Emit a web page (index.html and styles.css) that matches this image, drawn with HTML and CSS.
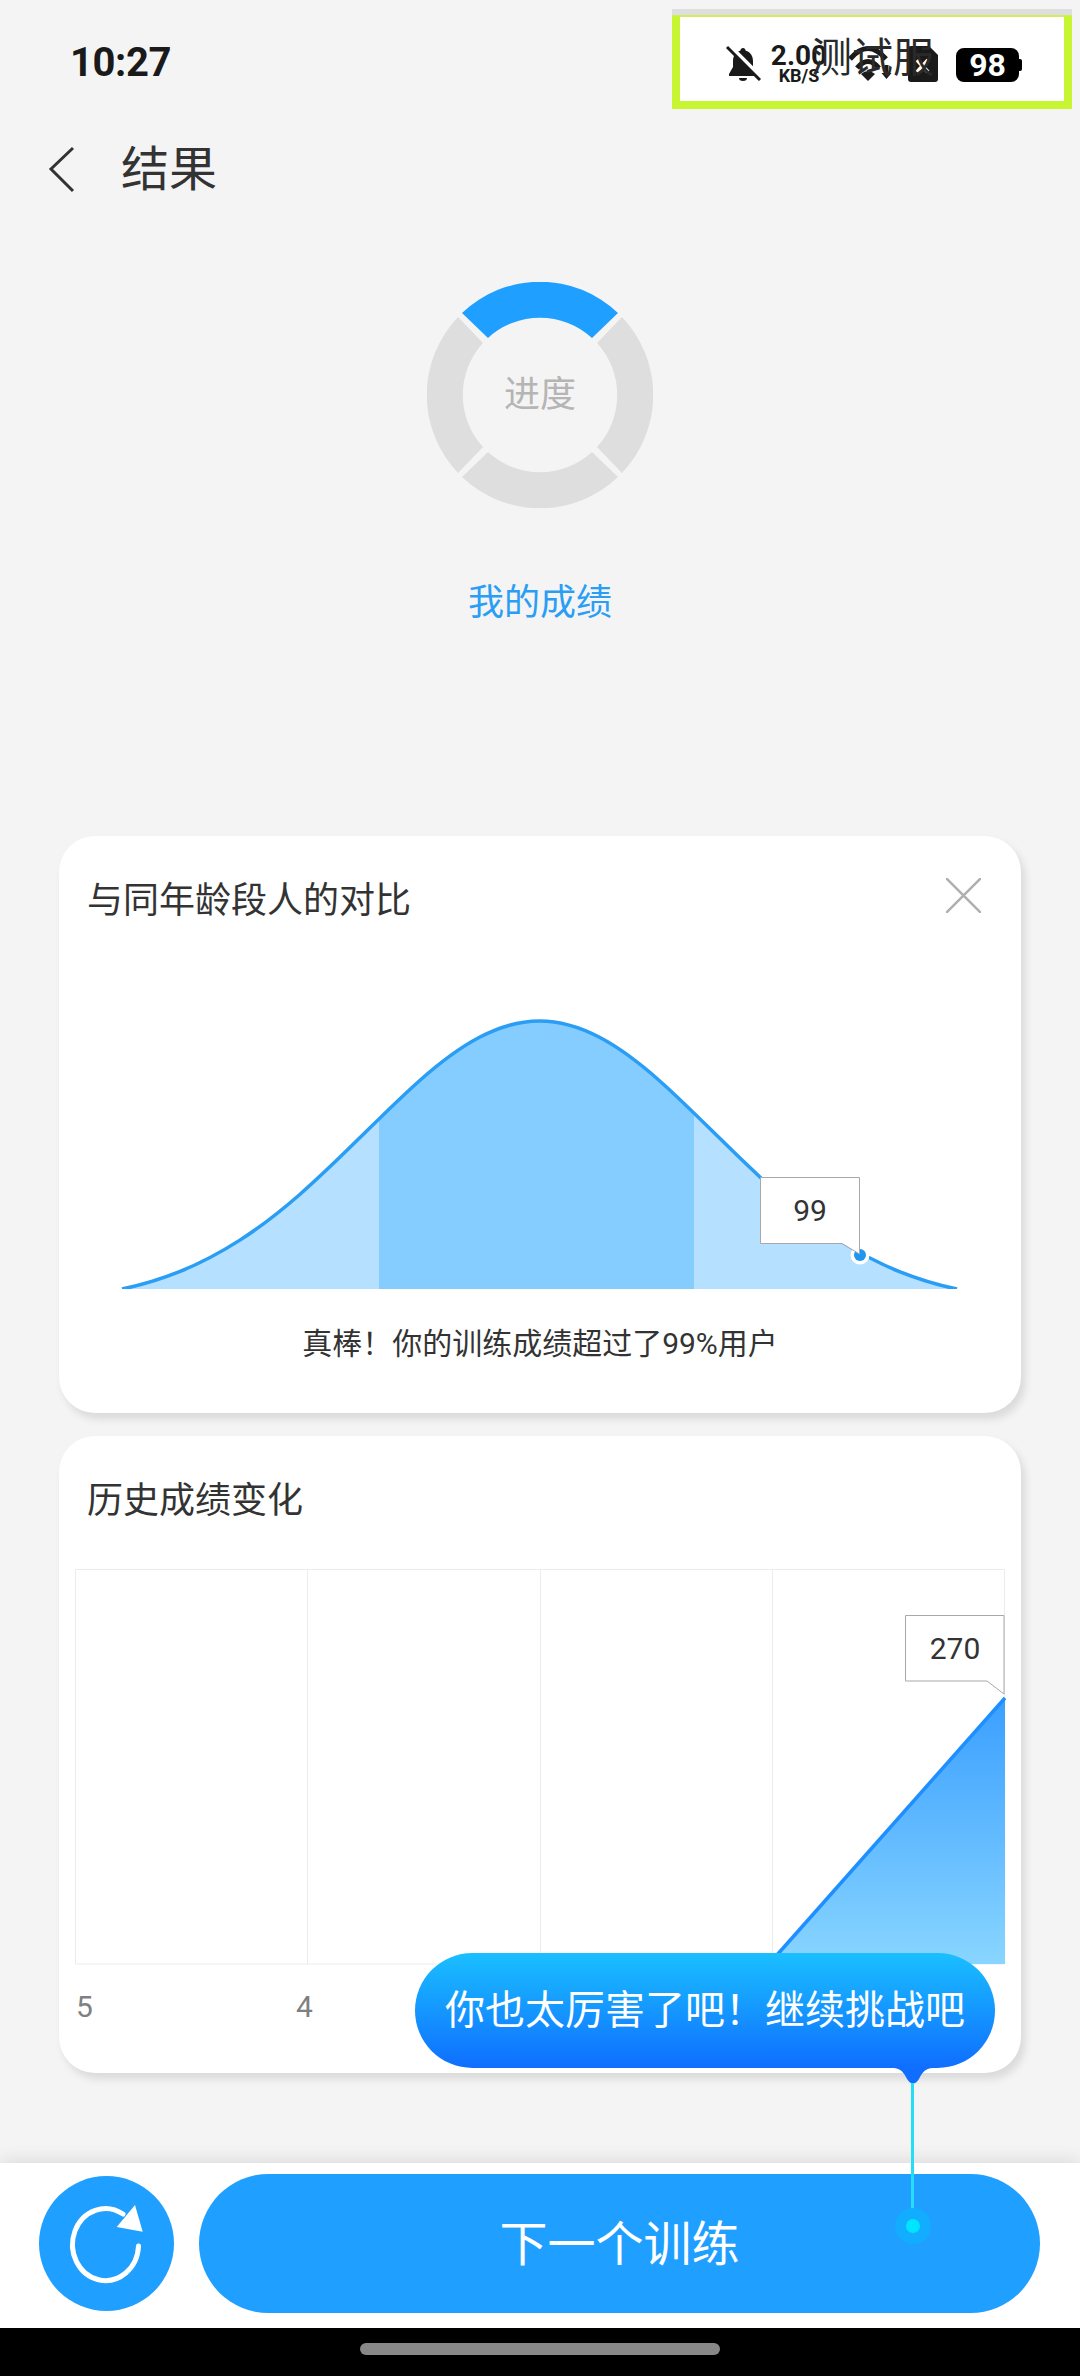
FILE: index.html
```html
<!DOCTYPE html>
<html lang="zh">
<head>
<meta charset="utf-8">
<title>结果</title>
<link rel="stylesheet" href="styles.css">
</head>
<body>
<div class="screen">
  <header class="status">
    <span class="time">10:27</span>
    <div class="status-box">
      <svg class="ic-bell" viewBox="0 0 36 36"><path class="dark" d="M18 3c-1.500 0-2.500 1-2.500 2.500C10.500 7 8 11 8 16v6l-4 7v2h28v-2l-4-7v-6c0-5-2.500-9-7.500-10.500C20.500 4 19.500 3 18 3zM14 33a4 3 0 0 0 8 0z"/><path class="slash-gap" d="M5 1l33 33"/><path class="slash" d="M2 2l33 33"/></svg>
      <div class="speed"><span class="speed-num">2.00</span><span class="speed-unit">KB/S</span></div>
      <svg class="ic-wifi" viewBox="0 0 45 38"><path class="wifi-arc" d="M0 15Q18-6 36 15M7 24Q18 11 29 24"/><path class="dark" d="M11 30Q18 24 25 30L18 37z"/><path class="dark" d="M34.500 21h4v8h3l-5 6-5-6h3z"/></svg>
      <svg class="ic-sim" viewBox="0 0 30 36"><path class="dark" d="M3 0H21L30 9V33a3 3 0 0 1-3 3H3a3 3 0 0 1-3-3V3a3 3 0 0 1 3-3z"/><path class="sim-x" d="M9 14l11 12M20 14L9 26"/></svg>
      <div class="battery"><span class="battery-num">98</span></div>
      <span class="server">测试服</span>
    </div>
  </header>

  <nav class="nav">
    <svg class="ic-back" viewBox="0 0 28 48"><path d="M25 2L3 23l22 22"/></svg>
    <h1 class="nav-title">结果</h1>
  </nav>

  <section class="progress">
    <div class="ring">
      <svg class="ring-svg" viewBox="0 0 226 226">
        <path class="seg-on" d="M35 31A113 113 0 0 1 191 31L165 56A77 77 0 0 0 61 56z"/>
        <path class="seg" d="M195 35A113 113 0 0 1 195 191L170 165A77 77 0 0 0 170 61z"/>
        <path class="seg" d="M191 195A113 113 0 0 1 35 195L61 170A77 77 0 0 0 165 170z"/>
        <path class="seg" d="M31 191A113 113 0 0 1 31 35L56 61A77 77 0 0 0 56 165z"/>
      </svg>
      <span class="ring-label">进度</span>
    </div>
    <p class="my-score">我的成绩</p>
  </section>

  <section class="card card-compare">
    <div class="card-head">
      <h2 class="card-title">与同年龄段人的对比</h2>
      <svg class="ic-close" viewBox="0 0 35 35"><path d="M0 0l35 35M35 0L0 35"/></svg>
    </div>
    <svg class="chart-bell" viewBox="59 960 962 350">
      <defs>
        <clipPath id="bellArea"><path d="M122 1289C141.200 1285.200 160.300 1279.400 179.500 1271.700C199.500 1263.600 219.500 1253.200 239.500 1240.400C259.500 1227.600 279.500 1212.100 299.500 1194.700C319.500 1177.300 339.500 1157.800 359.500 1138.100C379.500 1118.400 399.500 1098.400 419.500 1080.700C439.500 1063 459.500 1047.800 479.500 1037.300C499.500 1026.800 519.500 1021 539.500 1021C559.500 1021 579.500 1026.800 599.500 1037.300C619.500 1047.800 639.500 1063 659.500 1080.700C679.500 1098.400 699.500 1118.400 719.500 1138.100C739.500 1157.800 759.500 1177.300 779.500 1194.700C799.500 1212.100 819.500 1227.600 839.500 1240.400C859.500 1253.200 879.500 1263.600 899.500 1271.700C918.700 1279.400 937.800 1285.200 957 1289z"/></clipPath>
        <clipPath id="bellBase"><rect x="59" y="960" width="962" height="329"/></clipPath>
      </defs>
      <rect class="bell-light" x="100" y="1000" width="880" height="289" clip-path="url(#bellArea)"/>
      <rect class="bell-dark" x="379" y="1000" width="315" height="289" clip-path="url(#bellArea)"/>
      <g clip-path="url(#bellBase)">
        <path class="bell-line" d="M122 1289C141.200 1285.200 160.300 1279.400 179.500 1271.700C199.500 1263.600 219.500 1253.200 239.500 1240.400C259.500 1227.600 279.500 1212.100 299.500 1194.700C319.500 1177.300 339.500 1157.800 359.500 1138.100C379.500 1118.400 399.500 1098.400 419.500 1080.700C439.500 1063 459.500 1047.800 479.500 1037.300C499.500 1026.800 519.500 1021 539.500 1021C559.500 1021 579.500 1026.800 599.500 1037.300C619.500 1047.800 639.500 1063 659.500 1080.700C679.500 1098.400 699.500 1118.400 719.500 1138.100C739.500 1157.800 759.500 1177.300 779.500 1194.700C799.500 1212.100 819.500 1227.600 839.500 1240.400C859.500 1253.200 879.500 1263.600 899.500 1271.700C918.700 1279.400 937.800 1285.200 957 1289"/>
      </g>
      <circle class="dot-ring" cx="860" cy="1255" r="9.500"/>
      <circle class="dot" cx="860" cy="1255" r="6"/>
      <path class="tip" d="M760.500 1177.500H859.500V1254L842 1243.500H760.500z"/>
      <text class="tip-text" x="810" y="1221">99</text>
    </svg>
    <p class="caption">真棒！你的训练成绩超过了99%用户</p>
  </section>

  <section class="card card-history">
    <div class="card-head">
      <h2 class="card-title">历史成绩变化</h2>
    </div>
    <svg class="chart-history" viewBox="59 1560 962 415">
      <defs>
        <linearGradient id="histFill" gradientUnits="userSpaceOnUse" x1="0" y1="1698" x2="0" y2="1964">
          <stop offset="0" stop-color="#3a9fff"/>
          <stop offset="1" stop-color="#88d5ff"/>
        </linearGradient>
      </defs>
      <path class="grid" d="M75.500 1569.500H1004.500V1964H75.500zM307.500 1569.500V1964M540.500 1569.500V1964M772.500 1569.500V1964"/>
      <path class="hist-fill" d="M769 1964L1005 1698V1964z"/>
      <path class="hist-line" d="M769 1964L1005 1698"/>
      <path class="tip" d="M905.500 1615.500H1004V1694L987 1681H905.500z"/>
      <text class="tip-text" x="955" y="1659">270</text>
    </svg>
    <div class="axis"><span class="axis-label">5</span><span class="axis-label">4</span></div>
  </section>

  <footer class="bottom">
    <div class="actions">
      <button class="btn-refresh">
        <svg class="ic-refresh" viewBox="0 0 135 135"><path class="refresh-arc" d="M99.500 70A33 36 0 1 1 84 38"/><path class="refresh-head" d="M96 29L103.700 55.700L77.700 51z"/></svg>
      </button>
      <button class="btn-next">下一个训练</button>
    </div>
    <div class="home"><span class="home-pill"></span></div>
  </footer>

  <div class="coach">
    <p class="coach-text">你也太厉害了吧！继续挑战吧</p>
    <svg class="coach-tail" viewBox="0 0 40 16"><path d="M0 0C8 0 11 5 14 11Q20 20 26 11C29 5 32 0 40 0z"/></svg>
  </div>
  <span class="coach-line"></span>
  <span class="coach-halo"><span class="coach-dot"></span></span>
</div>
</body>
</html>
```
FILE: styles.css
```css
* { box-sizing: border-box; }
html, body { margin: 0; padding: 0; }
body { font-family: Roboto, "Noto Sans CJK SC", sans-serif; color: #333; }
h1, h2, p { margin: 0; font-weight: 400; }

.screen {
  position: relative;
  width: 1080px;
  height: 2376px;
  background: #f4f4f4;
  display: flex;
  flex-direction: column;
  overflow: hidden;
}

/* status bar */
.status {
  height: 120px;
  padding: 15px 8px 0 70px;
  display: flex;
  justify-content: space-between;
  align-items: flex-start;
  flex: none;
}
.time {
  margin-top: 28px;
  font-size: 40px;
  line-height: 40px;
  font-weight: 700;
  letter-spacing: -0.4px;
  color: #1a1a1a;
}
.status-box {
  position: relative;
  width: 400px;
  height: 94px;
  background: #fff;
  border: 8px solid #c8f532;
  border-top: 2px solid #cfee5e;
  box-shadow: 0 -6px 0 #dedede;
  padding-left: 45px;
  display: flex;
  align-items: flex-start;
}
.dark { fill: #1a1a1a; }
.ic-bell { width: 36px; height: 36px; margin-top: 28px; flex: none; }
.slash { fill: none; stroke: #1a1a1a; stroke-width: 3; }
.slash-gap { fill: none; stroke: #fff; stroke-width: 4; }
.speed { width: 54px; margin: 27px 0 0 11px; display: flex; flex-direction: column; align-items: center; flex: none; color: #1a1a1a; font-weight: 700; }
.speed-num { font-size: 28px; line-height: 24px; }
.speed-unit { font-size: 18px; line-height: 14px; margin-top: 1px; }
.ic-wifi { width: 45px; height: 38px; margin: 27px 0 0 24px; flex: none; overflow: visible; }
.wifi-arc { fill: none; stroke: #1a1a1a; stroke-width: 5; }
.ic-sim { width: 30px; height: 36px; margin: 29px 0 0 13px; flex: none; }
.sim-x { fill: none; stroke: #fff; stroke-width: 4; }
.battery {
  position: relative;
  width: 63px;
  height: 34px;
  margin: 31px 0 0 18px;
  background: #000;
  border-radius: 8px;
  display: flex;
  align-items: center;
  justify-content: center;
  flex: none;
}
.battery::after {
  content: "";
  position: absolute;
  left: 63px;
  top: 11px;
  width: 3px;
  height: 12px;
  background: #000;
  border-radius: 0 2px 2px 0;
}
.battery-num { color: #fff; font-size: 32px; line-height: 34px; font-weight: 700; }
.server {
  position: absolute;
  left: 131px;
  top: 17px;
  font-size: 41px;
  line-height: 48px;
  color: #2a2a2a;
  font-weight: 400;
}

/* nav */
.nav { height: 100px; padding-left: 48px; display: flex; align-items: center; flex: none; }
.ic-back { width: 28px; height: 48px; flex: none; }
.ic-back path { fill: none; stroke: #333; stroke-width: 3; }
.nav-title { margin-left: 45px; font-size: 48px; line-height: 60px; color: #333; }

/* progress */
.progress { margin-top: 62px; display: flex; flex-direction: column; align-items: center; flex: none; }
.ring { width: 226px; height: 226px; display: grid; place-items: center; }
.ring-svg, .ring-label { grid-area: 1 / 1; }
.ring-svg { width: 226px; height: 226px; display: block; }
.seg { fill: #dedede; }
.seg-on { fill: #1f9fff; }
.ring-label { font-size: 36px; line-height: 50px; color: #b5b5b5; }
.my-score { margin-top: 70px; font-size: 36px; line-height: 50px; color: #2a9df4; }

/* cards */
.card {
  width: 962px;
  margin-left: 59px;
  background: #fff;
  border-radius: 36px;
  box-shadow: 4px 6px 8px rgba(0, 0, 0, 0.11);
  flex: none;
}
.card-compare { margin-top: 208px; height: 577px; }
.card-history { margin-top: 23px; height: 637px; }
.card-head { padding: 40px 40px 0 28px; display: flex; justify-content: space-between; align-items: flex-start; }
.card-title { font-size: 36px; line-height: 50px; color: #333; }
.ic-close { width: 35px; height: 35px; margin-top: 2px; flex: none; }
.ic-close path { fill: none; stroke: #b0b0b0; stroke-width: 2.500; }

.chart-bell { display: block; width: 962px; height: 350px; margin-top: 34px; }
.bell-light { fill: #b5e0ff; }
.bell-dark { fill: #85ccff; }
.bell-line { fill: none; stroke: #2a9df4; stroke-width: 3.500; }
.dot-ring { fill: #fff; }
.dot { fill: #1f96f0; }
.tip { fill: #fff; stroke: #a8a8a8; stroke-width: 1; }
.tip-text { font-size: 30px; fill: #333; text-anchor: middle; }
.caption { margin-top: 14px; text-align: center; font-size: 30px; line-height: 40px; color: #333; }

.chart-history { display: block; width: 962px; height: 415px; margin-top: 34px; }
.grid { fill: none; stroke: #ececec; stroke-width: 1; }
.hist-fill { fill: url(#histFill); }
.hist-line { fill: none; stroke: #1e8fff; stroke-width: 3.500; }
.axis { margin-top: 14px; padding-left: 17px; display: flex; gap: 203px; }
.axis-label { font-size: 30px; line-height: 36px; color: #808080; }

/* bottom */
.bottom { margin-top: auto; flex: none; position: relative; box-shadow: 0 -4px 16px rgba(0, 0, 0, 0.09); }
.actions { height: 165px; background: #fff; padding: 11px 0 0 39px; display: flex; align-items: flex-start; gap: 25px; }
.btn-refresh { width: 135px; height: 135px; margin-top: 2px; padding: 0; border: 0; border-radius: 50%; background: #1f9fff; flex: none; }
.ic-refresh { display: block; width: 135px; height: 135px; }
.refresh-arc { fill: none; stroke: #fff; stroke-width: 5; stroke-linecap: round; }
.refresh-head { fill: #fff; }
.btn-next {
  width: 841px;
  height: 139px;
  padding: 0 0 8px;
  border: 0;
  border-radius: 70px;
  background: #1f9fff;
  color: #fff;
  font-family: inherit;
  font-size: 48px;
  flex: none;
}
.home { height: 48px; background: #000; display: flex; justify-content: center; padding-top: 15px; }
.home-pill { width: 360px; height: 12px; border-radius: 6px; background: #888; }

/* coach mark overlay */
.coach {
  position: absolute;
  left: 415px;
  top: 1953px;
  width: 580px;
  height: 115px;
  border-radius: 58px;
  background: linear-gradient(#1abfff, #0f6eff);
  display: flex;
  align-items: center;
  justify-content: center;
}
.coach-text { color: #fff; font-size: 40px; line-height: 56px; }
.coach-tail { position: absolute; left: 478px; top: 115px; width: 40px; height: 16px; display: block; }
.coach-tail path { fill: #0f6eff; }
.coach-line { position: absolute; left: 911px; top: 2083px; width: 3px; height: 143px; background: #27dcf5; }
.coach-halo { position: absolute; left: 895px; top: 2208px; width: 36px; height: 36px; border-radius: 50%; background: #12adff; display: flex; align-items: center; justify-content: center; }
.coach-dot { width: 14px; height: 14px; border-radius: 50%; background: #00e5ff; }
```
